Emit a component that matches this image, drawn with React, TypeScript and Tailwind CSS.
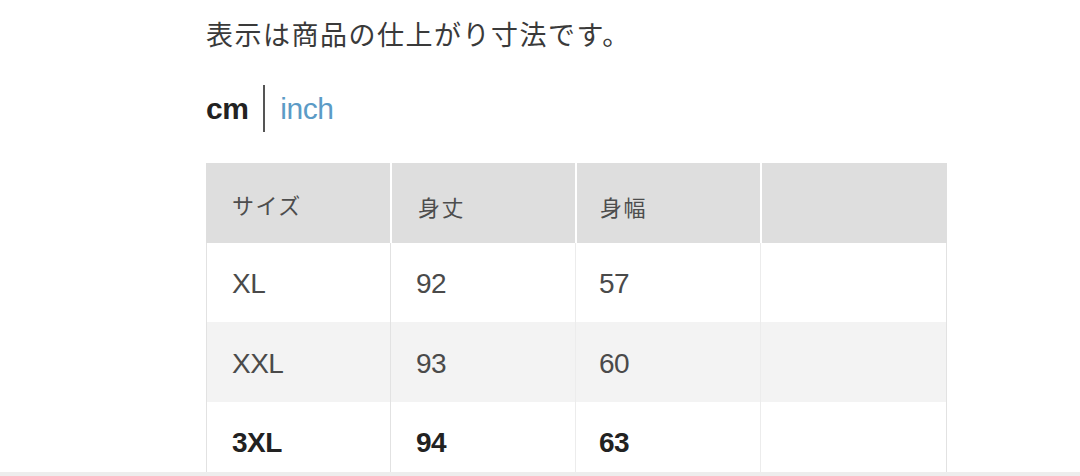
const rows = [
  { size: "XL", length: "92", width: "57", bg: "bg-white", bold: false, h: "h-[79px]", pad: "pt-[3px]" },
  { size: "XXL", length: "93", width: "60", bg: "bg-[#f3f3f3]", bold: false, h: "h-[80px]", pad: "pt-[4px]" },
  { size: "3XL", length: "94", width: "63", bg: "bg-white", bold: true, h: "h-[70px]", pad: "pt-[12px]" },
];

const jp = "font-['Noto_Sans_CJK_JP',sans-serif]";

export default function App() {
  return (
    <div className="w-[1080px] h-[476px] bg-white overflow-hidden flex flex-col font-['Liberation_Sans','Noto_Sans_CJK_JP',sans-serif]">
      <div className="pl-[206px] pt-[19px] flex flex-col">
        <p className={`text-[27px] leading-[30px] text-[#3a3a3a] tracking-[1.5px] ${jp}`}>
          表示は商品の仕上がり寸法です。
        </p>
        <div className="mt-[36px] flex items-center h-[47px]">
          <span className="text-[30px] font-bold text-[#222] tracking-[-0.5px]">cm</span>
          <span className="mx-[15px] w-[2px] h-[47px] bg-[#555]" />
          <span className="text-[30px] text-[#5b9bc6] tracking-[-0.5px]">inch</span>
        </div>
        <div className="mt-[31px] w-[741px] flex flex-col">
          <div className={`grid grid-cols-[184px_183px_183px_185px] gap-x-[2px] h-[80px] bg-white text-[22px] tracking-[1.5px] text-[#4d4d4d] ${jp}`}>
            <div className="bg-[#dedede] flex items-center pt-[2px] pl-[26px]">サイズ</div>
            <div className="bg-[#dedede] flex items-center pt-[6px] pl-[26px]">身丈</div>
            <div className="bg-[#dedede] flex items-center pt-[6px] pl-[23px]">身幅</div>
            <div className="bg-[#dedede]" />
          </div>
          {rows.map((r) => (
            <div
              key={r.size}
              className={`grid grid-cols-[184px_185px_185px_185px] ${r.h} border-l border-r border-[#e2e2e2] text-[28px] tracking-[-0.5px] ${r.bg} ${r.bold ? "font-bold text-[#222]" : "text-[#4a4a4a]"}`}
            >
              <div className={`flex items-center pl-[25px] border-r border-[#e2e2e2] ${r.pad}`}>{r.size}</div>
              <div className={`flex items-center pl-[25px] border-r border-[#ececec] ${r.pad}`}>{r.length}</div>
              <div className={`flex items-center pl-[23px] border-r border-[#ececec] ${r.pad}`}>{r.width}</div>
              <div />
            </div>
          ))}
        </div>
      </div>
      <div className="mt-auto h-[4px] bg-[#ededed]" />
    </div>
  );
}
